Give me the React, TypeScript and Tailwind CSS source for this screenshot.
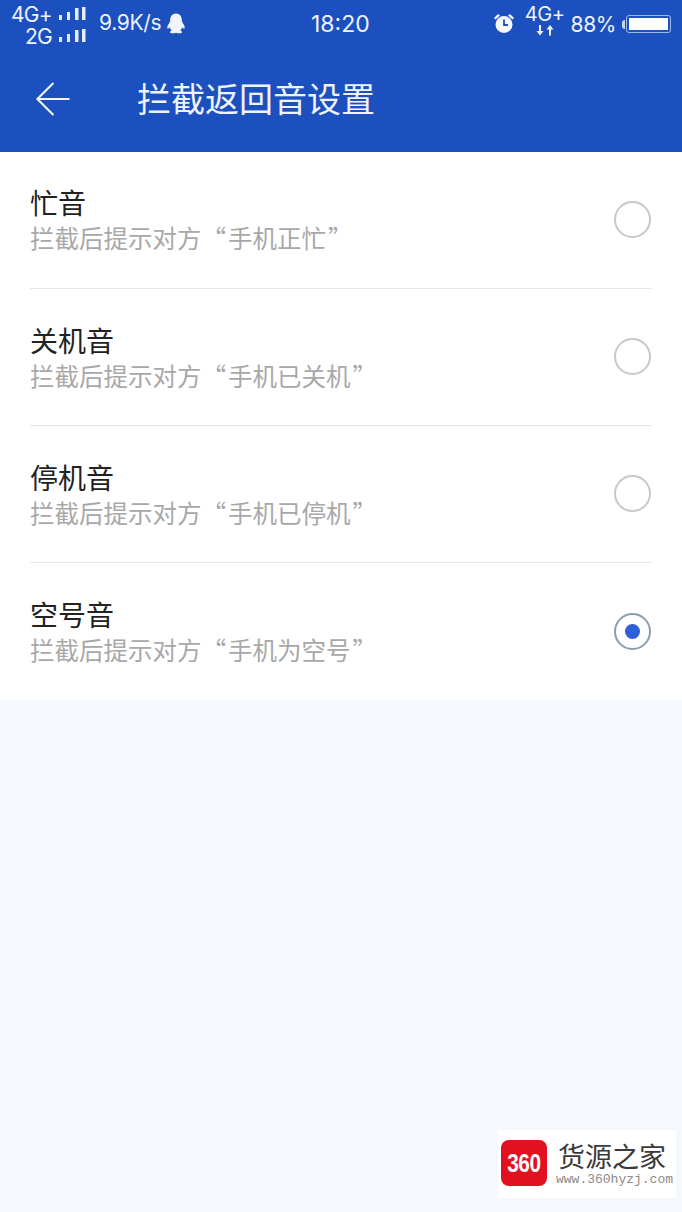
const cjk = "font-['Noto_Sans_CJK_SC','Noto_Sans',sans-serif]";

const options = [
  { title: '忙音', quoted: '手机正忙', checked: false },
  { title: '关机音', quoted: '手机已关机', checked: false },
  { title: '停机音', quoted: '手机已停机', checked: false },
  { title: '空号音', quoted: '手机为空号', checked: true },
];

function Signal() {
  return (
    <svg width="28" height="14" viewBox="0 0 28 14" className="text-[#e6edfa]">
      <rect x="1" y="8" width="3" height="5" fill="currentColor" />
      <rect x="9" y="5" width="3" height="8" fill="currentColor" />
      <rect x="17" y="1" width="3.500" height="12" fill="currentColor" />
      <rect x="24" y="0" width="3.500" height="13" fill="currentColor" />
    </svg>
  );
}

function Penguin() {
  return (
    <svg width="22" height="23" viewBox="0 0 22 22" fill="#f1f5fc">
      <path d="M11 1c-4 0-5.800 3-5.800 6.500 0 1-.2 1.800-.8 2.800C3 12.500 1.800 14.500 2.500 16c.5.800 1.500-.2 2.200-1.200.3 1.300 1 2.300 2 3.100-1.300.5-2 1.200-1.700 2.100.4 1 3.500 1.200 6 .3 2.500.9 5.600.7 6-.3.3-.9-.4-1.600-1.700-2.100 1-.8 1.700-1.800 2-3.100.7 1 1.700 2 2.200 1.200.7-1.500-.5-3.500-1.900-5.700-.6-1-.8-1.800-.8-2.800C16.800 4 15 1 11 1z" />
    </svg>
  );
}

function Alarm() {
  return (
    <svg width="22" height="22" viewBox="0 0 22 22">
      <circle cx="11" cy="12.500" r="8.500" fill="#f4f7fd" />
      <path d="M11 7.500v5.500h4" stroke="#1c50bf" strokeWidth="1.800" fill="none" />
      <path d="M1 6 L5 2 L7 3.500 L2.500 7.500 Z M21 6 L17 2 L15 3.500 L19.500 7.500 Z" fill="#f4f7fd" />
    </svg>
  );
}

function DataArrows() {
  return (
    <svg width="18" height="11" viewBox="0 0 18 11" fill="#eef3fc">
      <path d="M3 0h2v6h2.500L4 10.500 .5 6H3z" />
      <path d="M13 10.500h2v-6h2.500L14 0l-3.500 4.500H13z" />
    </svg>
  );
}

function Radio({ checked }: { checked: boolean }) {
  if (checked) {
    return (
      <div className="w-[37px] h-[37px] mr-[1px] mt-[1px] rounded-full border-2 border-[#8b9db3] flex items-center justify-center">
        <div className="w-[15px] h-[15px] rounded-full bg-[#2f5fd8]" />
      </div>
    );
  }
  return <div className="w-[37px] h-[37px] mr-[1px] rounded-full border-2 border-[#c8c8c8]" />;
}

function StatusBar() {
  return (
    <div className="h-[45px] pl-[11px] pr-[11px] flex items-start text-[#eef3fc] font-['Inter','Liberation_Sans',sans-serif]">
      <div className="w-[75px] pt-[4px] flex flex-col items-end">
        <div className="flex items-center gap-[6px] h-[20px]">
          <span className="text-[21px] leading-none tracking-[-0.7px]">4G+</span>
          <Signal />
        </div>
        <div className="flex items-center gap-[6px] h-[22px] mt-[1px]">
          <span className="text-[21px] leading-none tracking-[-0.7px]">2G</span>
          <Signal />
        </div>
      </div>
      <div className="ml-[13px] pt-[11px] flex items-center gap-[4px]">
        <span className="text-[21px] leading-[24px] tracking-[-0.3px]">9.9K/s</span>
        <Penguin />
      </div>
      <span className="absolute left-[311px] top-[11px] text-[23px] leading-[26px]">18:20</span>
      <div className="ml-auto pt-[12px] flex items-start">
        <Alarm />
        <div className="ml-[10px] -mt-[9px] w-[40px] flex flex-col items-center">
          <span className="text-[20px] leading-[22px] tracking-[-0.5px]">4G+</span>
          <DataArrows />
        </div>
        <span className="ml-[6px] text-[21px] leading-[26px] tracking-[-0.4px]">88%</span>
        <div className="ml-[6px] mt-[3px] flex items-center">
          <div className="w-[3px] h-[9px] bg-[#c9d6f0] rounded-l-sm" />
          <div className="w-[45px] h-[18px] ml-[1px] rounded-[3px] border border-[#9db7ea] p-[2px]">
            <div className="h-full w-full bg-white" />
          </div>
        </div>
      </div>
    </div>
  );
}

export default function App() {
  return (
    <div className={`relative w-[682px] h-[1212px] overflow-hidden bg-[#f5f9fe] ${cjk}`}>
      <header className="h-[152px] bg-[#1c50bf]">
        <StatusBar />
        <div className="h-[106px] flex items-center pl-[35px]">
          <svg width="35" height="34" viewBox="0 0 36 36" fill="none" stroke="#f0f4fc" strokeWidth="2.200" className="mt-[2px]">
            <path d="M19 1 L2 18 L19 35 M2 18 H36" />
          </svg>
          <h1 className="ml-[67px] text-[34px] leading-[44px] font-normal text-[#eef3fc]">拦截返回音设置</h1>
        </div>
      </header>

      <div className="bg-white pl-[30px] pr-[30px] h-[548px] flex flex-col">
        {options.map((o, i) => (
          <div
            key={o.title}
            className={`h-[137px] flex items-center justify-between pb-[2px] ${i < 3 ? 'border-b border-[#e6e6e6]' : ''}`}
          >
            <div className={i === 0 ? 'flex flex-col' : 'flex flex-col mt-[1px]'}>
              <span className="text-[28px] leading-[38px] text-[#222222]">{o.title}</span>
              <span className="text-[24.500px] leading-[34px] text-[#a8a8a8]">
                拦截后提示对方“<span className="ml-[2px] mr-[2px]">{o.quoted}</span>”
              </span>
            </div>
            <Radio checked={o.checked} />
          </div>
        ))}
      </div>

      {/* watermark */}
      <div className="absolute left-[498px] top-[1130px] w-[178px] h-[68px] bg-white flex items-center pl-[3px]">
        <div className="w-[46px] h-[46px] rounded-[8px] bg-[#e2111f] flex items-center justify-center mt-[-2px]">
          <span className="text-white text-[26px] leading-none font-bold font-['Liberation_Sans',sans-serif] scale-x-[0.8] tracking-[-0.5px]">360</span>
        </div>
        <div className="ml-[10px] flex flex-col">
          <span className="ml-[1px] text-[27px] leading-[28px] text-[#3a3a3a] whitespace-nowrap">货源之家</span>
          <span className="mt-[3px] -ml-[1px] text-[13px] leading-[13px] text-[#8a8a8a] font-['Liberation_Mono',monospace] whitespace-nowrap">www.360hyzj.com</span>
        </div>
      </div>
    </div>
  );
}
